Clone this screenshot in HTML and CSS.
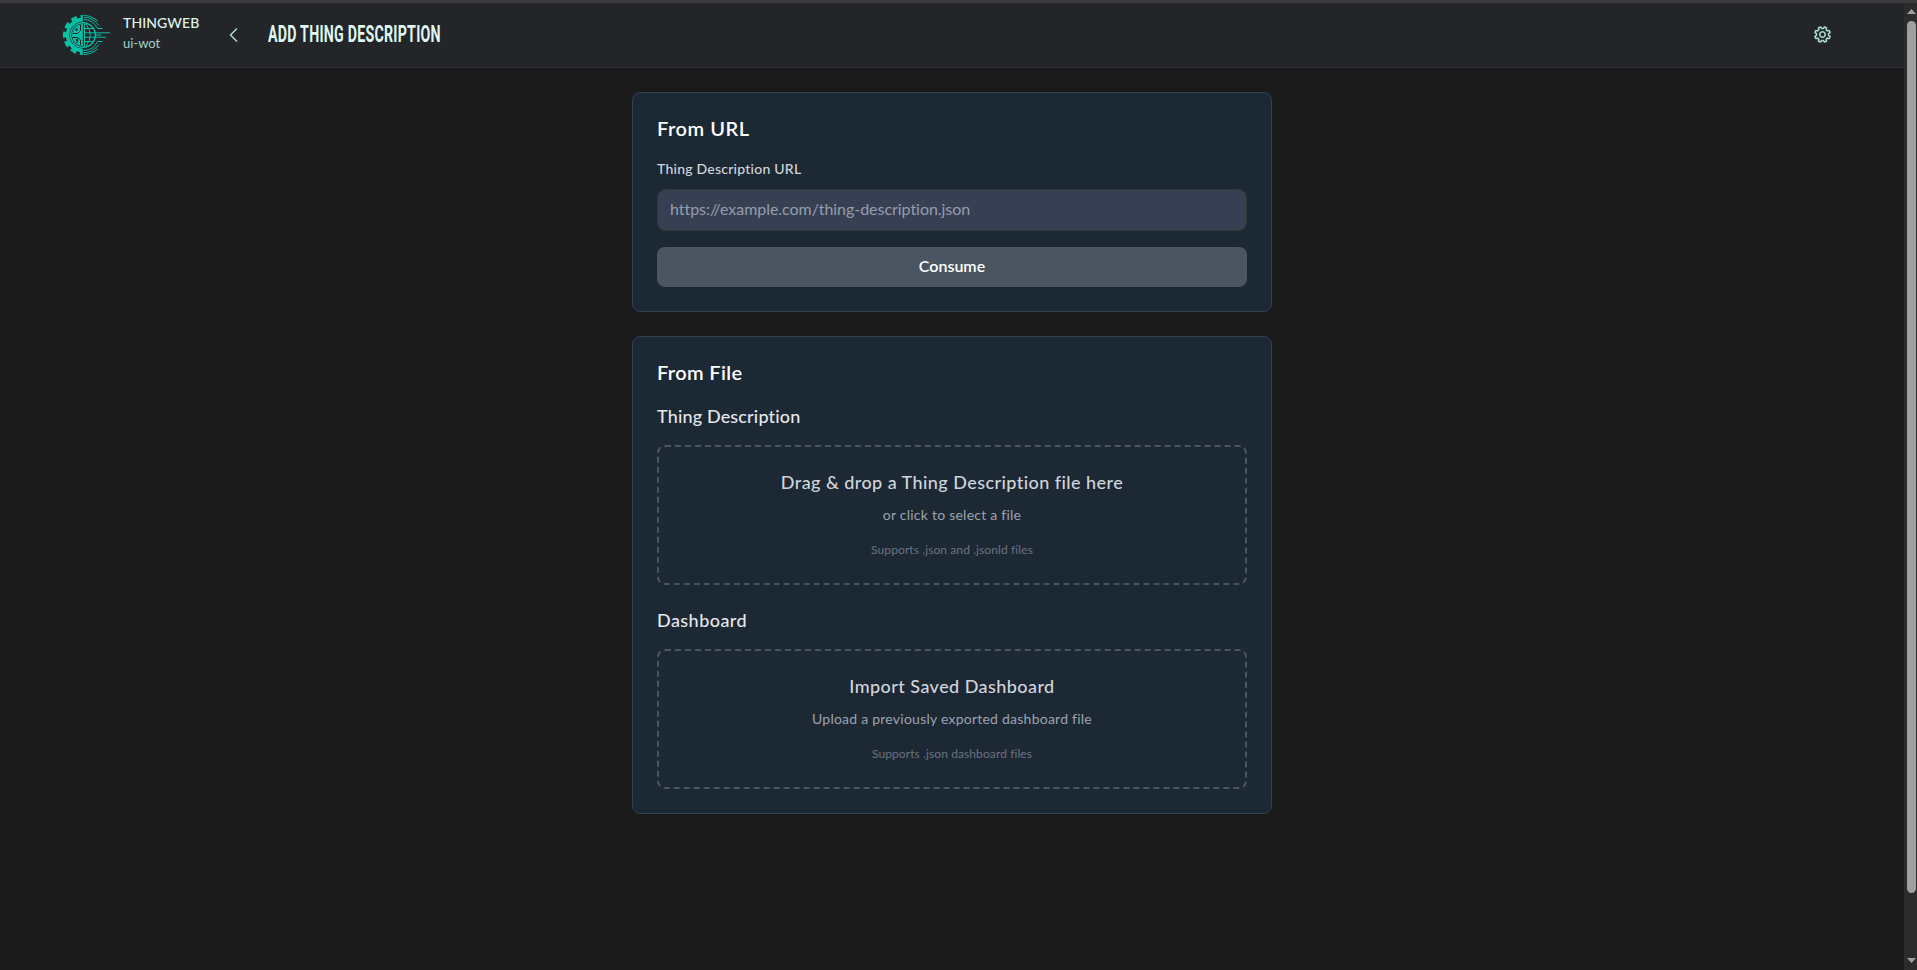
FILE: index.html
```html
<!DOCTYPE html>
<html lang="en">
<head>
<meta charset="utf-8">
<title>Add Thing Description</title>
<link rel="stylesheet" href="styles.css">
</head>
<body>
<div class="page">
  <header class="header">
    <div class="brand">
      <svg class="logo" viewBox="0 0 48 42" fill="none">
        <defs><clipPath id="left-half"><path d="M0 0h20.800v42H0z"/></clipPath></defs>
        <g clip-path="url(#left-half)">
          <circle cx="21" cy="21" r="17.200" fill="#06bfa5"/>
          <circle cx="21" cy="21" r="18.300" stroke="#06bfa5" stroke-width="3.600" stroke-dasharray="6 3.582" stroke-dashoffset="3"/>
          <circle cx="21" cy="21" r="13.600" fill="#242528"/>
          <circle cx="21" cy="21" r="11" fill="#06bfa5"/>
          <path d="M18.500 10.500v6l-3 3h-5M18.500 31v-5l-3-2.500h-5M15 29v-3" stroke="#242528"/>
          <circle cx="14.500" cy="15.500" r="1.200" fill="#242528"/>
          <circle cx="15" cy="26" r="1.200" fill="#242528"/>
        </g>
        <circle cx="21" cy="21" r="12.300" stroke="#06bfa5" stroke-width="1.400"/>
        <g stroke="#06bfa5" stroke-width="1">
          <path d="M22.500 9.500v23M24 10q8.500 11 0 22M22 14.500h9M22 18.800h26M22 23.200h22M22 27.500h9"/>
          <path d="M21.500 5.500a15.500 15.500 0 0 1 14 9h5M21.500 3.300a18 18 0 0 1 14 6.700l1.500 1.500M21.500 1.300a20 20 0 0 1 12 4l2.500 2M21.500 36.500a15.500 15.500 0 0 0 14-9h5M21.500 38.700a18 18 0 0 0 14-6.700l1.500-1.500M21.500 40.700a20 20 0 0 0 12-4l2.500-2M34 21h5"/>
        </g>
      </svg>
      <div class="names"><div class="name">THINGWEB</div><div class="sub">ui-wot</div></div>
    </div>
    <svg class="back" viewBox="0 0 10 16" fill="none"><path d="M8 1.500 1.500 8 8 14.500" stroke="#a9dccd" stroke-width="1.500"/></svg>
    <h1 class="title"><span>ADD THING DESCRIPTION</span></h1>
    <svg class="gear" viewBox="-8.300 -8.300 16.600 16.600" fill="none" stroke="#a9dccd" stroke-width="1.500" stroke-linejoin="round"><path d="M7.400 1.900 6.600 3.900 4.700 3.550 3.550 4.700 3.900 6.600 1.900 7.400.820 5.840H-.820L-1.900 7.400-3.900 6.600-3.550 4.700-4.700 3.550-6.600 3.900-7.400 1.900-5.840.820V-.820L-7.400-1.900-6.600-3.900-4.700-3.550-3.550-4.700-3.900-6.600-1.900-7.400-.820-5.840H.820L1.900-7.400 3.900-6.600 3.550-4.700 4.700-3.550 6.600-3.900 7.400-1.900 5.840-.820V.820z"/><circle r="2.700"/></svg>
  </header>
  <main class="main">
    <section class="card url-card">
      <h2 class="url-title">From URL</h2>
      <label class="label">Thing Description URL</label>
      <div class="input">https://example.com/thing-description.json</div>
      <button class="button">Consume</button>
    </section>
    <section class="card file-card">
      <h2>From File</h2>
      <h3>Thing Description</h3>
      <div class="drop">
        <p class="lead">Drag &amp; drop a Thing Description file here</p>
        <p class="hint">or click to select a file</p>
        <p class="note">Supports .json and .jsonld files</p>
      </div>
      <h3 class="dash-title">Dashboard</h3>
      <div class="drop">
        <p class="lead">Import Saved Dashboard</p>
        <p class="hint">Upload a previously exported dashboard file</p>
        <p class="note">Supports .json dashboard files</p>
      </div>
    </section>
  </main>
</div>
<div class="scrollbar"><i class="up"></i><i class="thumb"></i><i class="down"></i></div>
</body>
</html>
```
FILE: styles.css
```css
* { box-sizing: border-box; }
body { margin: 0; height: 970px; display: flex; overflow: hidden; background: #1a1a1a; font-family: Lato, "Liberation Sans", sans-serif; font-variant-ligatures: none; }
h1, h2, h3, p { margin: 0; }
.page { flex: 1; min-width: 0; }
.header { height: 68px; display: flex; align-items: flex-start; padding-left: 62px; background: #242528; border-top: 3px solid #3b3b3e; border-bottom: 1px solid #2f3237; }
.brand { display: flex; width: 167px; gap: 13px; }
.logo { width: 48px; height: 42px; margin-top: 11px; flex: none; }
.names { white-space: nowrap; }
.name { font-size: 14px; line-height: 20px; margin-top: 10px; color: #dcf7ef; font-weight: 500; letter-spacing: 0.1px; }
.sub { font-size: 13px; line-height: 18px; margin-top: 1px; color: #a3d1c4; }
.back { width: 10px; height: 16px; margin-top: 24px; }
.title { width: 200px; margin: 17px 0 0 29px; font: 700 24px/28px Roboto, sans-serif; color: #dff7f0; white-space: nowrap; }
.title span { display: inline-block; transform: scaleX(0.592); transform-origin: left; letter-spacing: 0.4px; }
.gear { width: 17px; height: 17px; margin: 23px 73px 0 auto; }
.main { width: 640px; margin: 24px auto 0; }
.card { background: #1d2835; border: 1px solid #334155; border-radius: 8px; padding: 21px 24px 20px; }
.url-card { height: 220px; }
.file-card { height: 478px; margin-top: 24px; }
h2 { font-size: 20px; line-height: 28px; font-weight: 600; color: #fff; margin-bottom: 16px; letter-spacing: 0.35px; }
.url-title { letter-spacing: 0.55px; margin-bottom: 17px; }
.label { display: block; font-size: 14px; line-height: 20px; font-weight: 500; color: #d1d5db; margin-bottom: 10px; letter-spacing: 0.24px; }
.input { height: 42px; line-height: 38px; padding: 0 12px; border: 1px solid #333; border-radius: 8px; background: #374053; color: #949dac; font-size: 16px; letter-spacing: -0.04px; }
.button { display: block; width: 100%; height: 40px; margin-top: 16px; border: 0; border-radius: 8px; background: #4a5561; color: #fff; font: 600 16px/38px Lato, sans-serif; padding: 0 0 2px; }
h3 { font-size: 18px; line-height: 28px; font-weight: 500; color: #e5e7eb; margin-bottom: 15px; letter-spacing: 0.16px; }
.dash-title { letter-spacing: 0.45px; }
.drop { height: 140px; border: 2px dashed #4a5563; border-radius: 8px; text-align: center; margin-bottom: 21px; padding-top: 21px; }
.lead { font-size: 18px; line-height: 28px; font-weight: 500; color: #d1d5db; letter-spacing: 0.44px; }
.hint { font-size: 14px; line-height: 20px; margin-top: 9px; color: #9ca3af; letter-spacing: 0.24px; }
.note { font-size: 12px; line-height: 16px; margin-top: 17px; color: #6b7280; letter-spacing: 0.1px; }
.scrollbar { width: 13px; padding: 6px 1px 7px 3px; display: flex; flex-direction: column; background: #2c2c2c; border-top: 3px solid #3b3b3e; }
.thumb { height: 872px; margin-top: 7px; border-radius: 5px; background: #9f9f9f; }
.up { height: 5px; background: #9f9f9f; clip-path: polygon(50% 0, 100% 100%, 0 100%); }
.down { height: 5px; margin-top: auto; background: #9f9f9f; clip-path: polygon(0 0, 100% 0, 50% 100%); }
```
